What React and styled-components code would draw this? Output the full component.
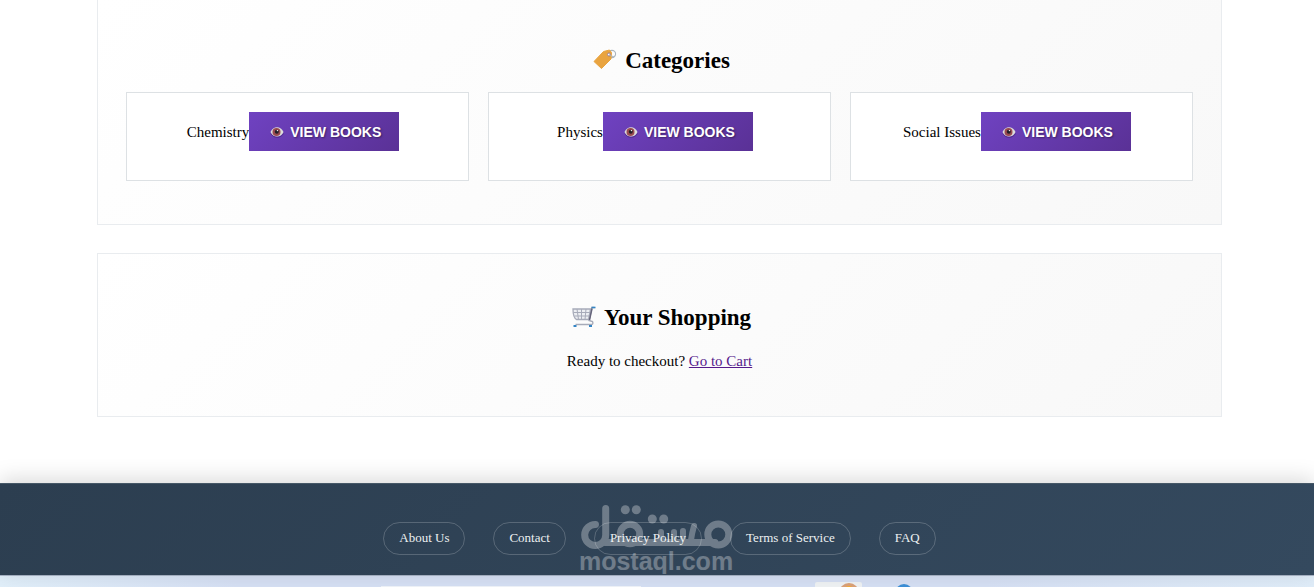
import React from 'react';
import styled, { createGlobalStyle } from 'styled-components';

const categories = ['Chemistry', 'Physics', 'Social Issues'];
const footerLinks = ['About Us', 'Contact', 'Privacy Policy', 'Terms of Service', 'FAQ'];

const TagIcon = () => (
  <svg width="24" height="22" viewBox="0 0 24 22" aria-hidden="true">
    <circle cx="19" cy="5" r="3.6" fill="none" stroke="#aab4bd" strokeWidth="1.1" />
    <path d="M1 12.5 10.5 2.5 16.5 1 18.5 3.5 18 10 8.5 19.5Z" fill="#e9a440" strokeLinejoin="round" stroke="#e9a440" />
    <circle cx="16" cy="5.5" r="1.5" fill="#fff" stroke="#8b7090" strokeWidth=".8" />
    <path d="M16 5.5C17.5 6.5 20 8.5 21.8 7" fill="none" stroke="#aab4bd" />
  </svg>
);

const CartIcon = () => (
  <svg width="24" height="22" viewBox="0 0 24 22" fill="none" aria-hidden="true">
    <path d="M1 3H18.5L16.5 13.5H4.5C2 12 1 8 1 3Z" fill="#eceef2" stroke="#a7abb9" strokeWidth="1.3" />
    <path d="M5 3 6.5 13.5M9.5 3V13.5M14 3 13 13.5M1.5 6.5H18M2.5 10H17" stroke="#a7abb9" />
    <path d="M22.5 1.5H20L17 14.5 20.5 15.5C21.5 18 20.5 18.5 19 18.5H3.5" stroke="#a7abb9" strokeWidth="1.4" />
    <path d="M19.5 1.5H23.5" stroke="#3585c5" strokeWidth="1.6" />
    <path d="M20 2.5 17.5 14" stroke="#66657b" strokeWidth="1.5" />
    <path d="M1.5 20H4.5M17 20H20" stroke="#3585c5" strokeWidth="2.2" />
  </svg>
);

const EyeIcon = () => (
  <svg width="14" height="12" viewBox="0 0 14 12" aria-hidden="true">
    <path d="M1 7.5C3 12.5 11 12.5 13.5 7.5" fill="none" stroke="#3d2070" strokeOpacity=".6" />
    <path d="M.5 6C3 -.5 11 -.5 13.5 6 11 12 3 12 .5 6Z" fill="#dcdcda" />
    <circle cx="6.5" cy="6" r="4" fill="#9a4a50" />
    <circle cx="6.8" cy="5.8" r="2" fill="#211e28" />
    <circle cx="7.4" cy="4.6" r=".7" fill="#fff" />
  </svg>
);

const Watermark = () => (
  <MarkSvg width="156" height="72" viewBox="0 0 156 72" aria-hidden="true">
    <g fill="none" stroke="#fff" strokeWidth="7" strokeLinecap="round">
      <path d="M16.5 22.5A10.5 10.5 0 1 0 26.7 33V6.5" />
      <path d="M26 40.5H136" />
      <circle cx="51" cy="32" r="9.7" />
      <path d="M82 30V38M95 30V38M104 29V38M115 24Q113 31 112 38" strokeWidth="6" />
      <circle cx="139.3" cy="32.5" r="10.5" />
    </g>
    <g fill="#fff">
      <circle cx="46.3" cy="7.7" r="4.5" />
      <circle cx="57.3" cy="7.7" r="4.5" />
      <circle cx="73.3" cy="17" r="4.5" />
      <circle cx="84.7" cy="17" r="4.5" />
    </g>
    <text x="77" y="68" textAnchor="middle" fill="#fff" fontFamily="Liberation Sans, Arial, sans-serif" fontWeight="700" fontSize="25">mostaql.com</text>
  </MarkSvg>
);

const App = () => (
  <Page>
    <GlobalStyle />
    <Main>
      <Section $continued>
        <Heading>
          <TagIcon /> Categories
        </Heading>
        <CategoryGrid>
          {categories.map((name) => (
            <CategoryCard key={name}>
              <CategoryName>{name}</CategoryName>
              <ViewButton type="button" aria-label={`View books in ${name}`}>
                <EyeIcon /> VIEW BOOKS
              </ViewButton>
            </CategoryCard>
          ))}
        </CategoryGrid>
      </Section>
      <Section>
        <Heading>
          <CartIcon /> Your Shopping
        </Heading>
        <Checkout>
          Ready to checkout? <a href="#cart">Go to Cart</a>
        </Checkout>
      </Section>
    </Main>
    <Footer>
      <FooterNav>
        {footerLinks.map((label) => (
          <FooterLink key={label} href="#footer">{label}</FooterLink>
        ))}
      </FooterNav>
      <Watermark />
    </Footer>
    <Taskbar>
      <SearchBox />
      <svg width="120" height="11" viewBox="0 0 120 11" aria-hidden="true">
        <rect x="22" y="6" width="47" height="12" rx="2" fill="#eef1f3" />
        <circle cx="56" cy="17" r="10" fill="#d9a078" />
        <circle cx="56" cy="16" r="6" fill="#f5ae32" />
        <circle cx="111" cy="17" r="9" fill="#3d8fd6" />
      </svg>
    </Taskbar>
  </Page>
);

export default App;

const GlobalStyle = createGlobalStyle`
  * {
    box-sizing: border-box;
  }

  body {
    margin: 0;
    overflow-x: hidden;
    background: #fff;
    color: #000;
    font-family: 'Liberation Serif', 'Times New Roman', serif;
    font-size: 15px;
  }
`;

const Page = styled.div`
  display: flex;
  flex-direction: column;
`;

const Main = styled.main`
  display: flex;
  flex-direction: column;
  gap: 28px;
  padding: 0 92px 66px 97px;
`;

const Section = styled.section`
  padding: ${(props) => (props.$continued ? '47px 28px 43px' : '50px 28px 44px')};
  border: 1px solid #e9ecef;
  border-top-width: ${(props) => (props.$continued ? 0 : '1px')};
  background: linear-gradient(135deg, #fff, #f8f8f8);
`;

const Heading = styled.h2`
  display: flex;
  align-items: center;
  justify-content: center;
  gap: 8px;
  margin: 0 0 17px;
  padding-left: 4px;
  font-size: 23px;
  line-height: 28px;

  svg {
    margin-bottom: 2px;
  }
`;

const CategoryGrid = styled.div`
  display: grid;
  grid-template-columns: repeat(3, 1fr);
  gap: 19px;
`;

const CategoryCard = styled.div`
  display: flex;
  align-items: center;
  justify-content: center;
  padding: 19px 28px 29px 19px;
  border: 1px solid #dde1e4;
  background: #fff;
`;

const CategoryName = styled.span`
  padding-top: 2px;
`;

const ViewButton = styled.button`
  display: flex;
  align-items: center;
  justify-content: center;
  gap: 6px;
  width: 150px;
  height: 39px;
  padding: 0 0 0 3px;
  border: none;
  background: linear-gradient(135deg, #6f42c1, #5a3196);
  color: #fff;
  font-family: 'Liberation Sans', Arial, sans-serif;
  font-size: 14px;
  font-weight: 700;
  text-shadow: 1px 1px 2px rgba(0, 0, 0, 0.4);
  cursor: pointer;
`;

const Checkout = styled.p`
  margin: 0;
  padding-top: 1px;
  text-align: center;
  line-height: 22px;

  a {
    color: #551a8b;
  }
`;

const Footer = styled.footer`
  position: relative;
  padding: 38px 20px 20px;
  border-top: 1px solid #465867;
  background: linear-gradient(135deg, #2c3e50, #34495e);
  box-shadow: 0 -4px 20px rgba(0, 0, 0, 0.15);
`;

const FooterNav = styled.nav`
  display: flex;
  justify-content: center;
  gap: 28px;
  padding-left: 5px;
`;

const FooterLink = styled.a`
  padding: 0 15px 1px;
  border: 1px solid rgba(255, 255, 255, 0.2);
  border-radius: 18px;
  color: #ecf0f1;
  font-size: 13px;
  line-height: 30px;
  text-decoration: none;
`;

const MarkSvg = styled.svg`
  position: absolute;
  top: 18px;
  left: 50%;
  margin-left: -78px;
  opacity: 0.3;
  pointer-events: none;
`;

const Taskbar = styled.div`
  display: flex;
  justify-content: center;
  gap: 152px;
  height: 12px;
  padding-right: 20px;
  overflow: hidden;
  border-top: 1px solid #a9b5c7;
  background: linear-gradient(90deg, #e0eef9, #d5dff3 18%, #d5dff3 75%, #dfecf8);
`;

const SearchBox = styled.div`
  width: 260px;
  height: 12px;
  margin-top: 10px;
  background: #eef2f8;
`;
